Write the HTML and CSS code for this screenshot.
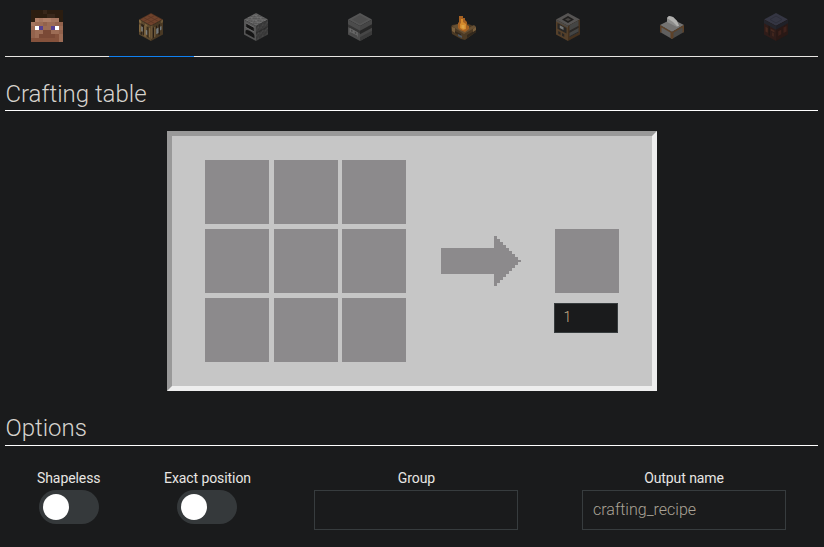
FILE: index.html
```html
<!DOCTYPE html>
<html lang="en">
<head>
<meta charset="utf-8">
<title>Crafting table</title>
<link rel="stylesheet" href="styles.css">
</head>
<body>
<svg class="defs" width="0" height="0" aria-hidden="true">
  <defs>
    <pattern id="grain" width="6" height="6" patternUnits="userSpaceOnUse">
      <path fill="#000" fill-opacity=".14" d="M0 0h2v2H0zM4 1h2v2H4zM2 4h2v2H2z"/>
      <path fill="#fff" fill-opacity=".08" d="M2 2h2v2H2zM0 4h2v1H0z"/>
    </pattern>
  </defs>
</svg>
<nav class="tabs">
  <button class="tab" aria-label="Player">
    <svg class="icon" viewBox="0 0 8 8" shape-rendering="crispEdges">
      <path fill="#9c6c55" d="M0 0h8v8H0z"/>
      <path fill="#2b1d10" d="M0 0h8v2H0zM0 2h1v1H0zM7 2h1v1H7z"/>
      <path fill="#38271a" d="M4 1h2v1H4zM3 0h1v1H3z"/>
      <path fill="#b08068" d="M1 2h1v1H1zM3 2h2v1H3z"/>
      <path fill="#a67760" d="M2 2h1v1H2zM5 2h2v1H5zM0 3h1v1H0z"/>
      <path fill="#92624c" d="M3 3h1v1H3zM6 3h2v1H6zM0 5h1v2H0zM7 5h1v1H7z"/>
      <path fill="#fff" d="M1 4h1v1H1zM6 4h1v1H6z"/>
      <path fill="#57418f" d="M2 4h1v1H2zM5 4h1v1H5z"/>
      <path fill="#7a4936" d="M3 5h2v1H3zM2 6h4v1H2z"/>
      <path fill="#85523c" d="M0 7h2v1H0zM2 7h4v1H2zM6 6h1v2H6z"/>
    </svg>
  </button>
  <button class="tab tab--active" aria-label="Crafting table">
    <svg class="icon icon--block" viewBox="0 0 32 32">
      <g transform="matrix(.75 .406 -.75 .406 16 3)"><path fill="#4f3422" d="M0 0h16v16H0z"/><path fill="#70432c" d="M1 1h14v14H1z"/><path stroke="#5a3524" stroke-width=".8" d="M1 5.5h14M1 10.5h14M5.5 1v14M10.5 1v14"/></g>
      <g transform="matrix(.75 .406 0 .93 4 9.5)"><path fill="#5b482e" d="M0 0h16v16H0z"/><path fill="#2c2218" d="M3 3h4v3H3zM5 5h2v9H5zM11 3h2v11h-2zM2 12h2v3H2z"/><path fill="#80663f" d="M0 0h3v3H0zM8 1h3v2H8zM13 3h2v10h-2zM0 5h2v8H0zM7 3h2v12H7z"/><path fill="#7c7e7c" d="M3 6h2v5H3zM9 7h2v5H9z"/></g>
      <g transform="matrix(.75 -.406 0 .93 16 16)"><path fill="#493924" d="M0 0h16v16H0z"/><path fill="#251d15" d="M2 3h2v11H2zM6 3h2v3H6zM10 3h2v11h-2z"/><path fill="#6c5738" d="M4 3h2v11H4zM13 0h3v3h-3zM0 0h2v14H0z"/><path fill="#747a7c" d="M7 6h3v6H7zM12 6h2v4h-2z"/></g>
    </svg>
  </button>
  <button class="tab" aria-label="Furnace">
    <svg class="icon icon--block" viewBox="0 0 32 32">
      <g transform="matrix(.75 .406 -.75 .406 16 3)"><path fill="#646464" d="M0 0h16v16H0z"/><path fill="url(#grain)" d="M0 0h16v16H0z"/></g>
      <g transform="matrix(.75 .406 0 .93 4 9.5)"><path fill="#545454" d="M0 0h16v16H0z"/><path fill="#151515" d="M3 3h10v4H3zM2 12q0-3 6-3t6 3v2H2z"/><path fill="#6c6c6c" d="M2 2h12v1H2zM2 7h12v1H2z"/></g>
      <g transform="matrix(.75 -.406 0 .93 16 16)"><path fill="#3c3c3c" d="M0 0h16v16H0z"/><path fill="#303030" d="M0 7h16v1.5H0z"/><path fill="url(#grain)" fill-opacity=".6" d="M0 0h16v16H0z"/></g>
    </svg>
  </button>
  <button class="tab" aria-label="Blast furnace">
    <svg class="icon icon--block" viewBox="0 0 32 32">
      <path fill="#555" d="m16 3 12 6.5L16 16 4 9.5z"/><path fill="#4d4d4d" d="m16 5 8 4.5-8 4.5-8-4.5z"/>
      <g transform="matrix(.75 .406 0 .93 4 9.5)"><path fill="#4c4c4c" d="M0 0h16v16H0z"/><path fill="#353535" d="M0 5h16v3H0z"/><path fill="#686868" d="M2 8h11v5H2z"/><path fill="#484848" d="M4 9h2v2H4zM9 9h2v2H9zM3 12h9v2H3z"/></g>
      <g transform="matrix(.75 -.406 0 .93 16 16)"><path fill="#464646" d="M0 0h16v16H0z"/><path fill="#262626" d="M0 5h16v4H0z"/><path fill="#3a3a3a" d="M0 12h16v4H0z"/></g>
    </svg>
  </button>
  <button class="tab" aria-label="Campfire">
    <svg class="icon icon--block" viewBox="0 0 32 32">
      <path fill="#4c3a24" d="m3 17 1-2 6-1 8-1 10 4v5l-11 8-4-1-9-5z"/>
      <path fill="#675033" d="m4 16 6-2 7 6 9-5 2 2-12 7z"/>
      <path fill="#32281c" d="m5 20 8 4v2l-8-4zM19 25l9-5v2l-9 6z"/>
      <path fill="#7a5f3c" d="m4 17 3 1v5l-3-2zM25 19l3-2v3l-3 2z"/>
      <path fill="#4b5560" d="m10 24 4 2v2l-4-2z"/>
      <path fill="#a56122" d="M10 18v-5l1-1V6h4v2h2v2l2 2v3l2 1v3l-4 3-5-2z"/>
      <path fill="#d48a2c" d="M12 18v-4l1-1V9h2v3l3 2v5l-3 1z"/>
      <path fill="#dda347" d="M13.500 18v-3h3v4z"/>
    </svg>
  </button>
  <button class="tab" aria-label="Smoker">
    <svg class="icon icon--block" viewBox="0 0 32 32">
      <path fill="#565453" d="m16 3 12 6.5L16 16 4 9.500z"/><path fill="#201f1e" d="m16 6 6 3.500-6 3.500-6-3.500z"/><path fill="#484542" d="m16 8 3 1.500-3 1.500-3-1.500z"/>
      <g transform="matrix(.75 .406 0 .93 4 9.5)"><path fill="#55402a" d="M0 0h16v16H0z"/><path fill="#292725" d="M2 3h12v6H2zM3 11h3v3H3zM8 11h3v3H8z"/><path fill="#737575" d="M5 4h5v3H5z"/><path fill="#4c4a48" d="M0 0h16v2H0z"/></g>
      <g transform="matrix(.75 -.406 0 .93 16 16)"><path fill="#44311e" d="M0 0h16v16H0z"/><path fill="#444544" d="M2 0h12v6H2zM2 8h12v5H2z"/><path fill="#282828" d="M2 6h12v2H2zM2 12h12v1H2z"/></g>
    </svg>
  </button>
  <button class="tab" aria-label="Stonecutter">
    <svg class="icon icon--block" viewBox="0 0 32 32">
      <path fill="#747372" d="m16 9 12 6-12 7-12-7z"/><path fill="#605f5e" d="m4 15 12 7v7L4 22z"/><path fill="#4b4a48" d="m28 15-12 7v7l12-7z"/>
      <path fill="#5c4128" d="m4 15 1.500 1v7L4 22zM14.500 21l1.500 1 1.500-1v7l-1.500 1-1.500-1zM26.500 16l1.500-1v7l-1.500 1zM4 15l12 7 12-7v1.500l-12 7-12-7z"/>
      <path fill="#8c8c8b" d="m11 12 0-4 2-2 4 1 4 4 2 5-2 1z"/><path fill="#b0b0ae" d="m11 8 2-2 4 1 4 4 2 5-2 0-4-4z"/>
    </svg>
  </button>
  <button class="tab" aria-label="Smithing table">
    <svg class="icon icon--block" viewBox="0 0 32 32">
      <path fill="#353643" d="m16 3 12 6.5L16 16 4 9.5z"/><path fill="none" stroke="#2d2f3a" d="m16 6 6 3.5-6 3.5-6-3.5z"/>
      <g transform="matrix(.75 .406 0 .93 4 9.5)"><path fill="#2f1c19" d="M0 0h16v16H0z"/><path fill="#24252c" d="M0 0h16v4H0z"/><path fill="#47291f" d="M2 7h3v5H2zM9 6h5v2H9zM11 9h2v4h-2z"/><path fill="#201815" d="M6 4h2v10H6z"/></g>
      <g transform="matrix(.75 -.406 0 .93 16 16)"><path fill="#291815" d="M0 0h16v16H0z"/><path fill="#1f2027" d="M0 0h16v4H0z"/><path fill="#3e211b" d="M3 7h4v5H3zM10 6h4v6h-4z"/></g>
    </svg>
  </button>
</nav>

<main>
  <h2 class="heading">Crafting table</h2>
  <section class="bench">
    <div class="grid">
      <div class="slot"></div><div class="slot"></div><div class="slot"></div>
      <div class="slot"></div><div class="slot"></div><div class="slot"></div>
      <div class="slot"></div><div class="slot"></div><div class="slot"></div>
    </div>
    <svg class="arrow" viewBox="0 0 80 50" shape-rendering="crispEdges">
      <path fill="#8c8a8c" d="M0 12h53V0h3v3h3v3h3v3h3v3h3v3h3v3h3v3h3v3h3v2h-3v3h-3v3h-3v3h-3v3h-3v3h-3v3h-3v3h-3v3h-3V38H0z"/>
    </svg>
    <div class="result">
      <div class="slot"></div>
      <input class="count" type="text" value="1" aria-label="Count">
    </div>
  </section>

  <h2 class="heading heading--options">Options</h2>
  <section class="options">
    <label class="option"><span>Shapeless</span><span class="switch"></span></label>
    <label class="option"><span>Exact position</span><span class="switch"></span></label>
    <label class="option"><span>Group</span><input class="field" type="text"></label>
    <label class="option"><span>Output name</span><input class="field" type="text" value="crafting_recipe"></label>
  </section>
</main>
</body>
</html>
```
FILE: styles.css
```css
* { box-sizing: border-box; }

body {
  margin: 0;
  padding: 0 6px 0 5px;
  height: 547px;
  overflow: hidden;
  background: #1a1b1c;
  color: #e8e6e3;
  font-family: Roboto, "Liberation Sans", sans-serif;
  font-size: 14px;
}

.defs { display: block; }

.tabs {
  display: grid;
  grid-template-columns: repeat(8, 1fr);
  column-gap: 20px;
  height: 57px;
  border-bottom: 1px solid #e8e6e3;
}

.tab {
  display: flex;
  justify-content: center;
  height: 57px;
  padding: 10px 0 0;
  border: 0;
  border-bottom: 1px solid transparent;
  background: none;
}

.tab--active {
  width: 85px;
  padding-right: 1px;
  border-bottom-color: #1080f0;
}

.icon { flex: none; width: 32px; height: 32px; }
.icon--block { filter: blur(.6px); }

.heading {
  height: 31px;
  margin: 23px 0 20px;
  padding-left: .4px;
  border-bottom: 1px solid #fff;
  color: #d6d3ce;
  font-size: 24px;
  font-weight: 300;
  line-height: 28px;
}

.heading--options {
  height: 32px;
  margin: 23px 0 24px;
}

.bench {
  display: flex;
  width: 490px;
  height: 260px;
  margin: 0 auto;
  padding: 24px 33px;
  border: 5px solid;
  border-color: #999 #eee #eee #999;
  background: #c6c6c6;
}

.grid {
  display: grid;
  grid-template-columns: 69px 68px 64px;
  grid-auto-rows: 64px;
  row-gap: 5px;
  width: 201px;
}

.slot { width: 64px; height: 64px; background: #8c8a8c; }

.arrow { flex: none; width: 80px; height: 50px; margin: 76px 33px 0 35px; }

.result { padding-top: 69px; }
.result .slot { margin-left: 1px; }

input {
  display: block;
  border: 1px solid #373c3e;
  border-radius: 0;
  background: #1a1b1c;
  font-family: inherit;
  font-weight: 300;
}

.count {
  width: 64px;
  height: 30px;
  margin-top: 10px;
  padding: 0 9px 2px;
  color: #c9b08b;
  font-size: 14px;
}

.options {
  display: flex;
  justify-content: space-between;
  padding: 0 32px;
}

.option {
  display: flex;
  flex-direction: column;
  align-items: center;
  letter-spacing: -.08px;
  line-height: 17px;
}

.option > span:first-child { height: 20px; }

.switch {
  display: flex;
  align-items: center;
  width: 60px;
  height: 34px;
  padding: 4px;
  border-radius: 17px;
  background: #35393b;
}

.switch::before {
  content: "";
  width: 26px;
  height: 26px;
  border-radius: 50%;
  background: #fff;
}

.field {
  width: 204px;
  height: 40px;
  padding: 0 10px 1px;
  color: #aaa396;
  font-size: 16px;
}
```
